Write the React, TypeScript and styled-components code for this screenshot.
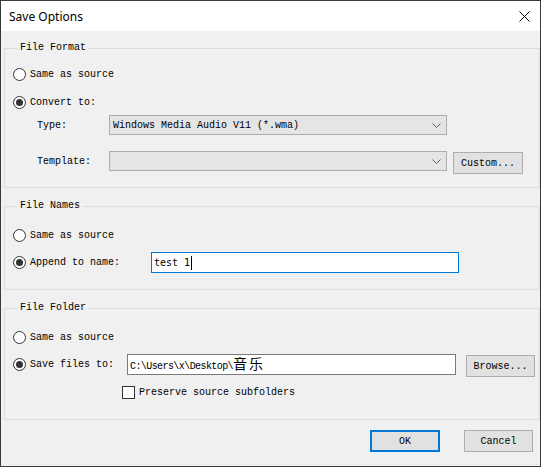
import React from 'react'
import styled, {createGlobalStyle} from 'styled-components'

const GlobalStyle = createGlobalStyle`
  html, body {
    margin: 0;
    padding: 0;
    background: #ffffff;
  }
`;

const mono = `"Liberation Mono", "Noto Sans CJK SC", monospace`;

const Window = styled.div`
  width: 541px;
  height: 467px;
  box-sizing: border-box;
  border: 1px solid #3a3a3a;
  background: #f0f0f0;
  display: flex;
  flex-direction: column;
  font-family: ${mono};
  font-size: 10px;
  color: #000;
`;

const TitleBar = styled.div`
  height: 30px;
  background: #ffffff;
  display: flex;
  align-items: center;
  justify-content: space-between;
  padding: 0 10px 0 8px;
  font-family: "Noto Sans", "Liberation Sans", sans-serif;
  font-size: 12px;
`;

const Body = styled.div`
  flex: 1;
  display: flex;
  flex-direction: column;
  padding: 11px 0 0 3px;
`;

const Group = styled.fieldset<{$gap: number}>`
  margin: 0 0 ${p => p.$gap}px 0;
  padding: 0 0 0 8px;
  border: 1px solid #dcdcdc;
  min-width: 0;
`;

const Legend = styled.legend`
  margin-left: 5px;
  padding: 0 2px;
  line-height: 12px;
  height: 12px;
`;

const Rows = styled.div<{$top: number; $bottom: number}>`
  display: flex;
  flex-direction: column;
  padding: ${p => p.$top}px 0 ${p => p.$bottom}px 0;
`;

const RadioRow = styled.div<{$gap?: number}>`
  display: flex;
  align-items: center;
  height: 16px;
  margin-top: ${p => p.$gap || 0}px;
`;

const FieldRow = styled.div<{$gap?: number; $indent?: number}>`
  display: flex;
  align-items: flex-start;
  margin-top: ${p => p.$gap || 0}px;
  padding-left: ${p => p.$indent || 0}px;
`;

const Radio = styled.span<{$on?: boolean}>`
  width: 13px;
  height: 13px;
  box-sizing: border-box;
  border: 1px solid #333;
  border-radius: 50%;
  background: #fff;
  display: inline-flex;
  align-items: center;
  justify-content: center;
  margin-right: 4px;
  &::after {
    content: '';
    width: 7px;
    height: 7px;
    border-radius: 50%;
    background: #333;
    display: ${p => (p.$on ? 'block' : 'none')};
  }
`;

const Label = styled.span<{$width: number}>`
  width: ${p => p.$width}px;
  flex: none;
  display: flex;
  align-items: center;
  height: 21px;
`;

const RadioLabel = styled.div<{$width: number}>`
  width: ${p => p.$width}px;
  flex: none;
  display: flex;
  align-items: center;
  height: 21px;
`;

const Select = styled.div<{$width: number}>`
  width: ${p => p.$width}px;
  height: 20px;
  box-sizing: border-box;
  border: 1px solid #adadad;
  background: #e5e5e5;
  display: flex;
  align-items: center;
  justify-content: space-between;
  padding: 0 5px 0 3px;
`;

const TextBox = styled.div<{$width: number; $focus?: boolean}>`
  width: ${p => p.$width}px;
  height: 21px;
  box-sizing: border-box;
  border: 1px solid ${p => (p.$focus ? '#0078d7' : '#7a7a7a')};
  background: #fff;
  display: flex;
  align-items: center;
  padding-left: 2px;
  white-space: nowrap;
  overflow: hidden;
  line-height: 17px;
`;

const InputText = styled.span`
  font-family: "DejaVu Sans Mono", "Liberation Mono", monospace;
  font-size: 10px;
`;

const PathText = styled.span`
  font-size: 10px;
  letter-spacing: -0.58px;
`;

const Cjk = styled.span`
  font-family: "Noto Sans CJK SC", sans-serif;
  font-size: 14px;
  letter-spacing: 2px;
  line-height: 17px;
`;

const Caret = styled.span`
  display: inline-block;
  width: 1px;
  height: 14px;
  background: #000;
  margin-left: 1px;
`;

const Button = styled.div<{$width: number; $default?: boolean; $left?: number}>`
  width: ${p => p.$width}px;
  height: 22px;
  box-sizing: border-box;
  border: ${p => (p.$default ? '2px solid #0078d7' : '1px solid #adadad')};
  background: #e1e1e1;
  display: flex;
  align-items: center;
  justify-content: center;
  margin-left: ${p => p.$left || 0}px;
  margin-top: 1px;
  flex: none;
`;

const Check = styled.span`
  width: 13px;
  height: 13px;
  box-sizing: border-box;
  border: 1px solid #333;
  background: #fff;
  margin-right: 4px;
  flex: none;
`;

const CheckRow = styled.div`
  display: flex;
  align-items: center;
  height: 13px;
  margin-top: 9px;
  padding-left: 109px;
`;

const Footer = styled.div`
  display: flex;
  justify-content: flex-end;
  gap: 24px;
  padding: 9px 7px 0 0;
`;

const Chevron = () => (
    <svg width="9" height="5" viewBox="0 0 9 5">
        <polyline points="0.5,0.5 4.5,4.5 8.5,0.5" fill="none" stroke="#606060" strokeWidth="1"/>
    </svg>
);

const CloseIcon = () => (
    <svg width="11" height="11" viewBox="0 0 11 11">
        <line x1="0.5" y1="0.5" x2="10.5" y2="10.5" stroke="#000" strokeWidth="1"/>
        <line x1="10.5" y1="0.5" x2="0.5" y2="10.5" stroke="#000" strokeWidth="1"/>
    </svg>
);

function App() {
    return (
        <>
            <GlobalStyle/>
            <Window>
                <TitleBar>
                    <span>Save Options</span>
                    <CloseIcon/>
                </TitleBar>
                <Body>
                    <Group $gap={12}>
                        <Legend>File Format</Legend>
                        <Rows $top={12} $bottom={13}>
                            <RadioRow><Radio/>Same as source</RadioRow>
                            <RadioRow $gap={12}><Radio $on/>Convert to:</RadioRow>
                            <FieldRow $gap={5} $indent={24}>
                                <Label $width={72}>Type:</Label>
                                <Select $width={338}>
                                    <span>Windows Media Audio V11 (*.wma)</span>
                                    <Chevron/>
                                </Select>
                            </FieldRow>
                            <FieldRow $gap={15} $indent={24}>
                                <Label $width={72}>Template:</Label>
                                <Select $width={338}>
                                    <span/>
                                    <Chevron/>
                                </Select>
                                <Button $width={70} $left={6}>Custom...</Button>
                            </FieldRow>
                        </Rows>
                    </Group>

                    <Group $gap={12}>
                        <Legend>File Names</Legend>
                        <Rows $top={15} $bottom={16}>
                            <RadioRow><Radio/>Same as source</RadioRow>
                            <FieldRow $gap={9}>
                                <RadioLabel $width={138}><Radio $on/>Append to name:</RadioLabel>
                                <TextBox $width={308} $focus>
                                    <InputText>test 1</InputText>
                                    <Caret/>
                                </TextBox>
                            </FieldRow>
                        </Rows>
                    </Group>

                    <Group $gap={0}>
                        <Legend>File Folder</Legend>
                        <Rows $top={15} $bottom={20}>
                            <RadioRow><Radio/>Same as source</RadioRow>
                            <FieldRow $gap={9}>
                                <RadioLabel $width={114}><Radio $on/>Save files to:</RadioLabel>
                                <TextBox $width={329}>
                                    <PathText>C:\Users\x\Desktop\<Cjk>音乐</Cjk></PathText>
                                </TextBox>
                                <Button $width={69} $left={10}>Browse...</Button>
                            </FieldRow>
                            <CheckRow><Check/>Preserve source subfolders</CheckRow>
                        </Rows>
                    </Group>

                    <Footer>
                        <Button $width={70} $default>OK</Button>
                        <Button $width={69}>Cancel</Button>
                    </Footer>
                </Body>
            </Window>
        </>
    )
}

export default App;
